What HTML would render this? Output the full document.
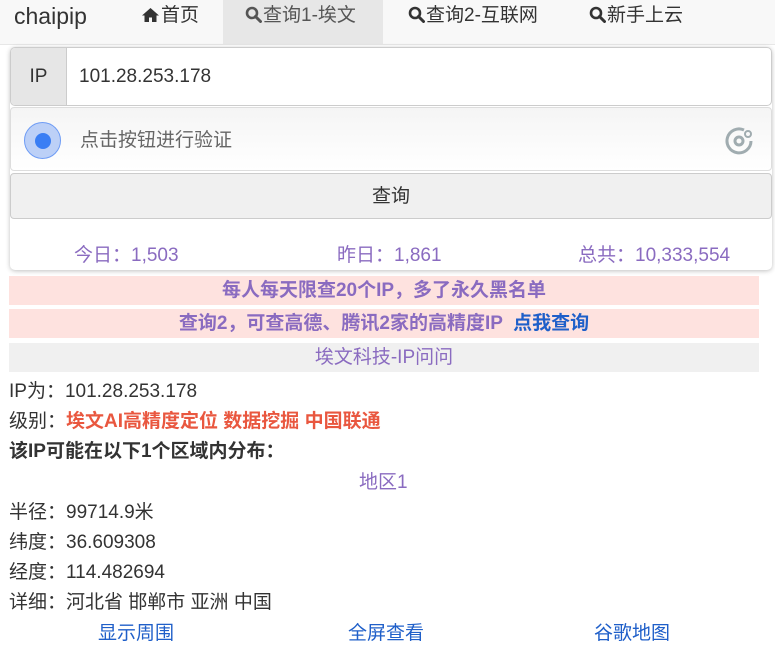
<html><head><style>
body{margin:0;width:775px;height:655px;overflow:hidden;font-family:"Liberation Sans","Noto Sans CJK SC",sans-serif;font-size:19px;color:#333;background:#fff;position:relative}
.a{position:absolute}
.nav{left:0;top:0;width:775px;height:44px;background:#f8f8f8;border-bottom:1px solid #e7e7e7}
.ni{top:0;height:44px;line-height:32px;font-size:19px;color:#333;white-space:nowrap}
.ni svg{vertical-align:-2px;margin-right:1px}
.card{left:10px;top:47px;width:762px;height:223px;background:#fff;border-radius:5px;box-shadow:0 1px 5px rgba(0,0,0,.25)}
.pur{color:#8a6bc0}
.row{left:9px;line-height:30px;white-space:nowrap}
</style></head><body>
<div class="a nav"></div>
<div class="a ni" style="left:14px;font-size:23px;line-height:32px">chaipip</div>
<div class="a" style="left:223px;top:0;width:160px;height:44px;background:#e7e7e7"></div>
<div class="a ni" style="left:141px"><svg width="19" height="16" viewBox="0 0 19 16"><path d="M9.5 1L1 8.5h2.5V15h4.5v-4.5h3V15h4.5V8.5H18z" fill="#333"/></svg>首页</div>
<div class="a ni" style="left:245px;color:#555"><svg width="17" height="17" viewBox="0 0 17 17"><circle cx="7" cy="7" r="5" fill="none" stroke="#555" stroke-width="2.6"/><path d="M10.5 10.5L15.5 15.5" stroke="#555" stroke-width="3" stroke-linecap="round"/></svg>查询1-埃文</div>
<div class="a ni" style="left:408px"><svg width="17" height="17" viewBox="0 0 17 17"><circle cx="7" cy="7" r="5" fill="none" stroke="#333" stroke-width="2.6"/><path d="M10.5 10.5L15.5 15.5" stroke="#333" stroke-width="3" stroke-linecap="round"/></svg>查询2-互联网</div>
<div class="a ni" style="left:589px"><svg width="17" height="17" viewBox="0 0 17 17"><circle cx="7" cy="7" r="5" fill="none" stroke="#333" stroke-width="2.6"/><path d="M10.5 10.5L15.5 15.5" stroke="#333" stroke-width="3" stroke-linecap="round"/></svg>新手上云</div>
<div class="a card"></div>
<div class="a" style="left:10px;top:47px;width:762px;height:59px;border:1px solid #ccc;border-radius:5px;box-sizing:border-box;overflow:hidden">
 <div class="a" style="left:0;top:0;width:55px;height:59px;background:#e6e6e6;border-right:1px solid #ccc;text-align:center;line-height:57px">IP</div>
 <div class="a" style="left:68px;top:0;line-height:57px">101.28.253.178</div>
</div>
<div class="a" style="left:10px;top:107px;width:762px;height:64px;border:1px solid #ddd;border-radius:4px;box-sizing:border-box;background:linear-gradient(#f5f5f5,#fff)">
 <div class="a" style="left:13px;top:14px;width:37px;height:37px;border-radius:50%;background:#bcd0f7;border:1px solid #6e9cf5;box-sizing:border-box"></div>
 <div class="a" style="left:24px;top:25px;width:16px;height:16px;border-radius:50%;background:#3a7ef4"></div>
 <div class="a" style="left:69px;top:2px;line-height:62px;color:#666">点击按钮进行验证</div>
 <svg class="a" style="left:712px;top:16px" width="32" height="32" viewBox="0 0 32 32"><path d="M21 6A12 12 0 1 0 28 17" fill="none" stroke="#a0acb0" stroke-width="3"/><circle cx="16" cy="17" r="4" fill="none" stroke="#a0acb0" stroke-width="3"/><circle cx="25" cy="10" r="3" fill="none" stroke="#a0acb0" stroke-width="2"/></svg>
</div>
<div class="a" style="left:10px;top:173px;width:762px;height:46px;border:1px solid #ccc;border-radius:4px;box-sizing:border-box;background:#f0f0f0;text-align:center;line-height:46px">查询</div>
<div class="a pur" style="left:74px;top:243px;line-height:26px">今日：1,503</div>
<div class="a pur" style="left:337px;top:243px;line-height:26px">昨日：1,861</div>
<div class="a pur" style="left:578px;top:243px;line-height:26px">总共：10,333,554</div>
<div class="a pur" style="left:9px;top:276px;width:750px;height:29px;background:#fee2df;text-align:center;line-height:29px;font-weight:bold">每人每天限查20个IP，多了永久黑名单</div>
<div class="a pur" style="left:9px;top:309px;width:750px;height:29px;background:#fee2df;text-align:center;line-height:29px;font-weight:bold">查询2，可查高德、腾讯2家的高精度IP &nbsp;<span style="color:#1f5fc9">点我查询</span></div>
<div class="a pur" style="left:9px;top:343px;width:750px;height:29px;background:#f0f0f0;text-align:center;line-height:29px">埃文科技-IP问问</div>
<div class="a row" style="top:377px">IP为：101.28.253.178</div>
<div class="a row" style="top:407px">级别：<b style="color:#e9573f">埃文AI高精度定位 数据挖掘 中国联通</b></div>
<div class="a row" style="top:437px;font-weight:bold">该IP可能在以下1个区域内分布：</div>
<div class="a pur" style="left:359px;top:468px;line-height:30px">地区1</div>
<div class="a row" style="top:498px">半径：99714.9米</div>
<div class="a row" style="top:528px">纬度：36.609308</div>
<div class="a row" style="top:558px">经度：114.482694</div>
<div class="a row" style="top:588px">详细：河北省 邯郸市 亚洲 中国</div>
<div class="a" style="left:98px;top:620px;line-height:28px;color:#1f5fc9">显示周围</div>
<div class="a" style="left:348px;top:620px;line-height:28px;color:#1f5fc9">全屏查看</div>
<div class="a" style="left:594px;top:620px;line-height:28px;color:#1f5fc9">谷歌地图</div>
</body></html>
